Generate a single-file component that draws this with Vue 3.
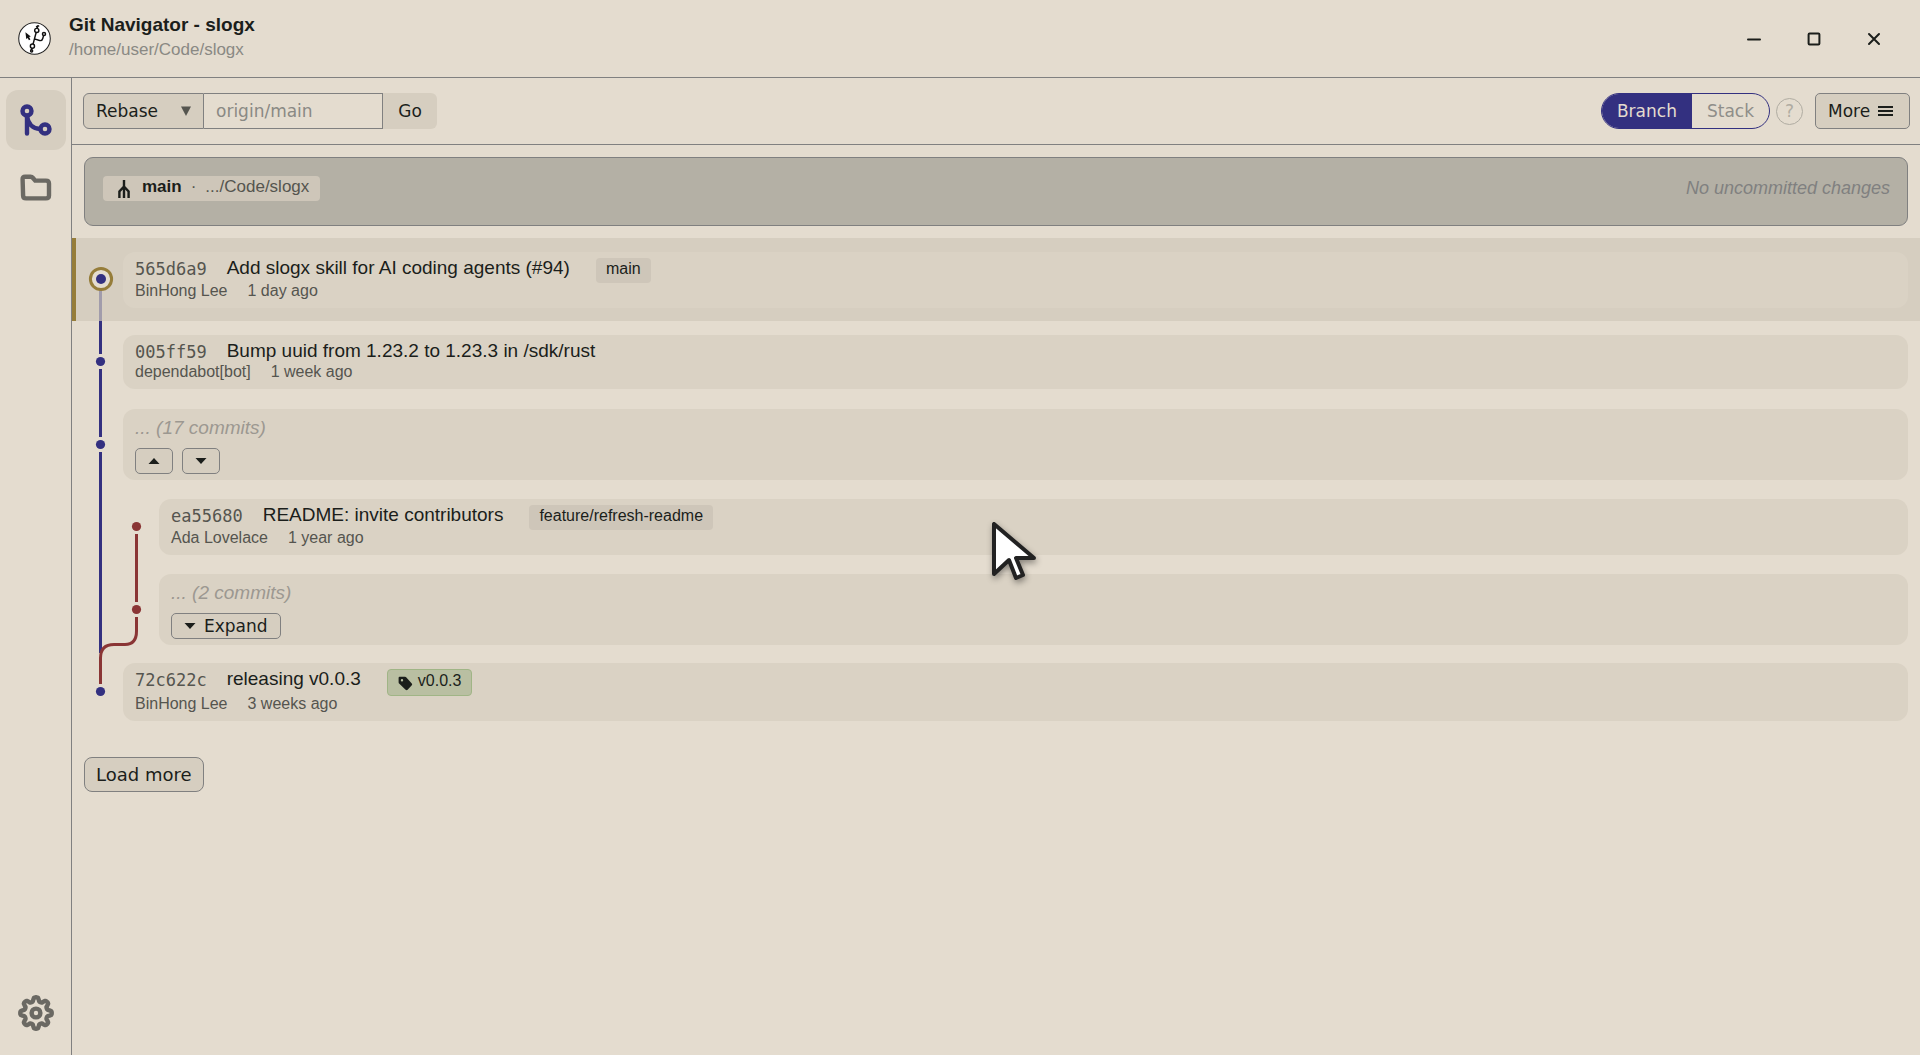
<template>
    <div class="app">
        <header class="titlebar">
            <svg class="logo" viewBox="0 0 32 32" aria-hidden="true">
                <circle cx="16" cy="16" r="15.3" fill="#fff" stroke="#222" stroke-width="1" />
                <g fill="none" stroke="#111" stroke-width="1.4">
                    <circle cx="18.2" cy="8.2" r="2" />
                    <circle cx="25.2" cy="11.6" r="1.5" />
                    <circle cx="14" cy="23.4" r="2" />
                    <path d="M17.6 10.2 L14.6 21.4 M18.6 6.2 L19.4 3 M13.6 25.4 L12.8 27 M16.6 16.6 L21 18 Q23.4 18.4 24 16 L24.8 13.2 M17.4 4.6 L20.6 3.8" />
                    <circle cx="13.2" cy="28" r="1" />
                </g>
                <path d="M7.2 10 L12.4 14 L10.8 14.6 L12 17 L10.6 17.6 L9.4 15.4 L8 16.6 Z" fill="#111" />
            </svg>
            <div class="heading">
                <h1>Git Navigator - slogx</h1>
                <p>/home/user/Code/slogx</p>
            </div>
            <div class="window-controls">
                <button type="button" aria-label="Minimize">
                    <svg viewBox="0 0 16 16"><path d="M2 8.6 H14" /></svg>
                </button>
                <button type="button" aria-label="Maximize">
                    <svg viewBox="0 0 16 16"><rect x="2.6" y="2.6" width="10.8" height="10.8" rx="1" /></svg>
                </button>
                <button type="button" aria-label="Close">
                    <svg viewBox="0 0 16 16"><path d="M3 3 L13 13 M13 3 L3 13" /></svg>
                </button>
            </div>
        </header>

        <div class="body">
            <nav class="sidebar">
                <button type="button" class="active" aria-label="Graph">
                    <svg viewBox="0 0 36 36">
                        <circle cx="9" cy="9" r="4.5" />
                        <circle cx="27" cy="27" r="4.5" />
                        <path d="M9 14 V31.6 M9 14 C10 22 15 26.6 22 27" stroke-linecap="round" />
                    </svg>
                </button>
                <button type="button" aria-label="Files">
                    <svg viewBox="0 0 36 36">
                        <path d="M7 7.8 H12.6 Q14 7.8 15 9 L17.2 11.6 H28 Q31 11.6 31 14.6 V26.6 Q31 29.4 28 29.4 H8 Q5.2 29.4 5.1 26.6 L4.6 10.2 Q4.5 7.8 7 7.8 Z" />
                    </svg>
                </button>
                <button type="button" class="settings" aria-label="Settings">
                    <svg viewBox="0 0 36 36">
                        <path :d="gear" stroke-linejoin="round" />
                        <circle cx="18" cy="18" r="4.4" />
                    </svg>
                </button>
            </nav>

            <main>
                <div class="toolbar">
                    <form class="action" @submit.prevent>
                        <div class="select">
                            <select v-model="action" aria-label="Action">
                                <option>Rebase</option>
                                <option>Merge</option>
                            </select>
                            <svg viewBox="0 0 10 10" aria-hidden="true"><path d="M0 0.4 H10 L5 10 Z" /></svg>
                        </div>
                        <input v-model="target" type="text" placeholder="origin/main" aria-label="Target">
                        <button type="submit">Go</button>
                    </form>
                    <div class="views">
                        <div class="toggle">
                            <button type="button" :class="{ on: view === 'branch' }" @click="view = 'branch'">Branch</button>
                            <button type="button" :class="{ on: view === 'stack' }" @click="view = 'stack'">Stack</button>
                        </div>
                        <button type="button" class="help" aria-label="Help">?</button>
                        <button type="button" class="more">
                            More
                            <svg viewBox="0 0 15 10" aria-hidden="true"><path d="M0 1 H15 M0 5 H15 M0 9 H15" /></svg>
                        </button>
                    </div>
                </div>

                <section class="worktree">
                    <div class="worktree-badge">
                        <svg viewBox="0 0 12 18" aria-hidden="true"><path d="M6 0 V18 M6 6.5 L1.4 11.5 V18 M6 6.5 L10.6 11.5 V18" /></svg>
                        <strong>main</strong>
                        <span>·</span>
                        <span>.../Code/slogx</span>
                    </div>
                    <em>No uncommitted changes</em>
                </section>

                <div class="history">
                    <ol>
                        <li v-for="row in rows" :key="row.id" :class="{ head: row.head, nested: row.nested }">
                            <article v-if="row.subject" class="card">
                                <div class="line">
                                    <code>{{ row.id }}</code>
                                    <span class="subject">{{ row.subject }}</span>
                                    <span v-if="row.branch" class="ref">{{ row.branch }}</span>
                                    <span v-if="row.tag" class="ref tag">
                                        <svg viewBox="0 0 15 15" aria-hidden="true">
                                            <path d="M1.5 0.8 H7 Q7.8 0.8 8.4 1.4 L13.8 7.4 Q14.6 8.4 13.8 9.3 L9.6 13.8 Q8.6 14.6 7.6 13.8 L1.4 7.8 Q0.6 7.2 0.6 6.2 V2 Q0.6 0.8 1.5 0.8 Z M4 3 A1.2 1.2 0 1 0 4 5.4 A1.2 1.2 0 1 0 4 3 Z" />
                                        </svg>
                                        {{ row.tag }}
                                    </span>
                                </div>
                                <div class="meta">
                                    <span>{{ row.author }}</span>
                                    <time>{{ row.age }}</time>
                                </div>
                            </article>
                            <article v-else class="card collapsed">
                                <em>... ({{ row.count }} commits)</em>
                                <div class="expanders">
                                    <template v-if="row.count > 2">
                                        <button type="button" aria-label="Expand up">
                                            <svg viewBox="0 0 12 6"><path d="M0.5 6 H11.5 L6 0 Z" /></svg>
                                        </button>
                                        <button type="button" aria-label="Expand down">
                                            <svg viewBox="0 0 12 6"><path d="M0.5 0 H11.5 L6 6 Z" /></svg>
                                        </button>
                                    </template>
                                    <button v-else type="button">
                                        <svg viewBox="0 0 12 6"><path d="M0.5 0 H11.5 L6 6 Z" /></svg>
                                        Expand
                                    </button>
                                </div>
                            </article>
                        </li>
                    </ol>
                    <svg class="graph" viewBox="0 0 84 495" width="84" height="495" aria-hidden="true">
                        <g fill="none" stroke-width="3">
                            <path d="M28.5 52 V83" stroke="#a19cab" />
                            <path d="M28.5 83 V116 M28.5 131 V199 M28.5 214 V415" stroke="#333080" />
                            <path d="M64.5 296 V364 M64.5 379 V393 Q64.5 406.5 53 406.5 H42 Q28.5 406.5 28.5 420 V446" stroke="#8a3535" />
                        </g>
                        <circle cx="29" cy="41" r="10.6" fill="#e4dccf" stroke="#967d3a" stroke-width="3" />
                        <g fill="#333080">
                            <circle cx="29" cy="41" r="5" />
                            <circle cx="28.5" cy="123.5" r="4.6" />
                            <circle cx="28.5" cy="206.5" r="4.6" />
                            <circle cx="28.5" cy="453.5" r="4.6" />
                        </g>
                        <g fill="#8a3535">
                            <circle cx="64.5" cy="288.5" r="4.6" />
                            <circle cx="64.5" cy="371.5" r="4.6" />
                        </g>
                    </svg>
                </div>

                <button type="button" class="load-more">Load more</button>
            </main>
        </div>

        <svg class="cursor" viewBox="0 0 60 70" aria-hidden="true">
            <path d="M10 10 V60 L25 46 L32 64 L39 61 L32 44 H50 Z" />
        </svg>
    </div>
</template>

<script setup>
import { ref } from 'vue'

const action = ref('Rebase')
const target = ref('')
const view = ref('branch')

const rows = [
    { id: '565d6a9', subject: 'Add slogx skill for AI coding agents (#94)', author: 'BinHong Lee', age: '1 day ago', branch: 'main', head: true },
    { id: '005ff59', subject: 'Bump uuid from 1.23.2 to 1.23.3 in /sdk/rust', author: 'dependabot[bot]', age: '1 week ago' },
    { id: 'gap-main', count: 17 },
    { id: 'ea55680', subject: 'README: invite contributors', author: 'Ada Lovelace', age: '1 year ago', branch: 'feature/refresh-readme', nested: true },
    { id: 'gap-feature', count: 2, nested: true },
    { id: '72c622c', subject: 'releasing v0.0.3', author: 'BinHong Lee', age: '3 weeks ago', tag: 'v0.0.3' },
]

// eight rounded teeth around the hub
const gear = Array.from({ length: 96 }, (_, i) => {
    const angle = (i / 96) * Math.PI * 2
    const radius = 13.7 + 2.1 * Math.tanh(2 * Math.cos(angle * 8))
    const x = 18 + radius * Math.sin(angle)
    const y = 18 - radius * Math.cos(angle)
    return `${i ? 'L' : 'M'}${x.toFixed(2)} ${y.toFixed(2)}`
}).join(' ') + ' Z'
</script>

<style>
body {
    background: #e4dccf;
}
</style>

<style scoped>
.app {
    display: flex;
    flex-direction: column;
    min-height: 100vh;
    background: #e4dccf;
    color: #1b1e1b;
    font: 17px/20px "Liberation Sans", Arial, sans-serif;
}

.app *,
.app {
    box-sizing: border-box;
}

h1,
p,
ol {
    margin: 0;
    padding: 0;
}

button,
input,
select {
    margin: 0;
    padding: 0;
    border: 0;
    border-radius: 0;
    background: none;
    color: inherit;
    font: 17px/20px "DejaVu Sans", sans-serif;
}

.titlebar {
    display: flex;
    align-items: center;
    height: 78px;
    padding: 0 16px 0 18px;
    border-bottom: 1px solid #808080;
}

.logo {
    width: 33px;
    height: 33px;
    margin-right: 18px;
}

.heading {
    flex: 1;
    padding-bottom: 4px;
}

h1 {
    font-size: 19px;
    line-height: 26px;
}

.heading p {
    line-height: 24px;
    color: #8a8984;
}

.window-controls {
    display: flex;
}

.window-controls button {
    display: grid;
    place-items: center;
    width: 60px;
    height: 40px;
}

.window-controls svg {
    width: 16px;
    height: 16px;
    fill: none;
    stroke: #1b1e1b;
    stroke-width: 2;
    stroke-linecap: round;
}

.body {
    flex: 1;
    display: flex;
}

.sidebar {
    display: flex;
    flex-direction: column;
    gap: 7px;
    width: 72px;
    padding: 12px 5px 12px 6px;
    border-right: 1px solid #808080;
}

.sidebar button {
    display: grid;
    place-items: center;
    height: 60px;
    border-radius: 12px;
    color: #6b6963;
}

.sidebar .active {
    background: #d6cec0;
    color: #333080;
}

.sidebar .settings {
    margin-top: auto;
}

.sidebar svg {
    width: 36px;
    height: 36px;
    fill: none;
    stroke: currentColor;
    stroke-width: 4.4;
}

main {
    flex: 1;
    min-width: 0;
}

.toolbar {
    display: flex;
    justify-content: space-between;
    padding: 15px 10px 15px 11px;
    border-bottom: 1px solid #808080;
}

.action,
.views,
.toggle {
    display: flex;
    align-items: center;
}

.select {
    display: grid;
    align-items: center;
}

.select select,
.select svg {
    grid-area: 1 / 1;
}

.select select {
    appearance: none;
    width: 121px;
    height: 36px;
    padding: 0 12px;
    border: 1px solid #808080;
    border-radius: 6px 0 0 6px;
    background: #d6cec0;
}

.select svg {
    justify-self: end;
    width: 10px;
    height: 10px;
    margin-right: 13px;
    fill: #55554f;
    pointer-events: none;
}

.action input {
    width: 179px;
    height: 36px;
    padding: 0 12px;
    border: 1px solid #808080;
    border-left: 0;
}

.action input::placeholder {
    color: #8a8984;
    opacity: 1;
}

.action > button {
    width: 54px;
    height: 36px;
    border-radius: 0 6px 6px 0;
    background: #d6cec0;
}

.toggle {
    overflow: hidden;
    border: 1px solid #333080;
    border-radius: 18px;
}

.toggle button {
    height: 34px;
    padding: 0 15px;
    color: #8f8e89;
}

.toggle .on {
    background: #333080;
    color: #e4dccf;
}

.help {
    width: 27px;
    height: 27px;
    margin: 0 12px 0 6px;
    border: 1px solid #b0aca2;
    border-radius: 50%;
    color: #b0aca2;
}

.more {
    display: flex;
    align-items: center;
    gap: 8px;
    width: 95px;
    height: 36px;
    padding-left: 12px;
    border: 1px solid #808080;
    border-radius: 5px;
    background: #d6cec0;
}

.more svg {
    width: 15px;
    height: 10px;
    stroke: #1b1e1b;
    stroke-width: 2;
}

.worktree {
    display: flex;
    justify-content: space-between;
    align-items: flex-start;
    height: 69px;
    margin: 12px;
    padding: 18px 17px 18px 18px;
    border: 1px solid #808080;
    border-radius: 9px;
    background: #b4b0a5;
}

.worktree-badge {
    display: flex;
    gap: 9px;
    height: 25px;
    padding: 0 11px 0 15px;
    border-radius: 4px;
    background: #cec6b9;
    line-height: 22px;
    color: #55554f;
}

.worktree-badge strong {
    color: #1b1e1b;
}

.worktree-badge svg {
    width: 12px;
    height: 18px;
    margin: 4px 3px 0 0;
    fill: none;
    stroke: #1b1e1b;
    stroke-width: 2.4;
}

.worktree > em {
    font-size: 18px;
    line-height: 24px;
    color: #808080;
}

.history {
    position: relative;
}

ol {
    display: grid;
    grid-template-rows: repeat(3, 83px 82px);
    list-style: none;
}

li {
    display: grid;
    align-items: center;
    padding: 0 12px 0 51px;
}

.nested {
    padding-left: 87px;
}

.head {
    padding-left: 47px;
    border-left: 4px solid #967d3a;
    background: #d6cec0;
}

.card {
    padding: 0 12px 7px;
    border-radius: 12px;
    background: #dad2c4;
}

.line {
    display: flex;
    align-items: flex-start;
    gap: 20px;
}

code {
    padding-top: 7px;
    font: 17px/20px "DejaVu Sans Mono", monospace;
    color: #55554f;
}

.subject {
    padding-top: 5px;
    font-size: 19px;
    line-height: 22px;
}

.ref {
    height: 25px;
    margin: 6px 0 -2px 6px;
    padding: 0 10px;
    border-radius: 4px;
    background: #cec6b9;
    font-size: 16px;
    line-height: 22px;
}

.tag {
    display: flex;
    gap: 5px;
    height: 27px;
    border: 1px solid #a0b586;
    background: #b9bfa2;
}

.tag svg {
    width: 15px;
    height: 15px;
    margin-top: 6px;
    fill: #1b1e1b;
    fill-rule: evenodd;
}

.meta {
    display: flex;
    gap: 20px;
    font-size: 16px;
    color: #55554f;
}

.collapsed {
    padding: 8px 12px 6px;
}

.collapsed em {
    display: block;
    font-size: 19px;
    line-height: 22px;
    color: #9c9891;
}

.expanders {
    display: flex;
    gap: 9px;
    margin-top: 9px;
}

.expanders button {
    display: flex;
    align-items: center;
    gap: 8px;
    height: 26px;
    padding: 0 12px;
    border: 1px solid #808080;
    border-radius: 5px;
    background: #d6cec0;
}

.expanders svg {
    width: 12px;
    height: 6px;
    fill: #1b1e1b;
}

.graph {
    position: absolute;
    top: 0;
    left: 0;
}

.load-more {
    margin: 24px 12px;
    height: 35px;
    padding: 0 11px;
    border: 1px solid #808080;
    border-radius: 8px;
    background: #d6cec0;
    font-size: 18px;
}

.cursor {
    position: absolute;
    top: 514px;
    left: 984px;
    width: 60px;
    height: 70px;
    fill: #fff;
    stroke: #222;
    stroke-width: 4;
    stroke-linejoin: round;
    filter: drop-shadow(1px 3px 3px rgb(0 0 0 / 0.4));
    pointer-events: none;
}
</style>
